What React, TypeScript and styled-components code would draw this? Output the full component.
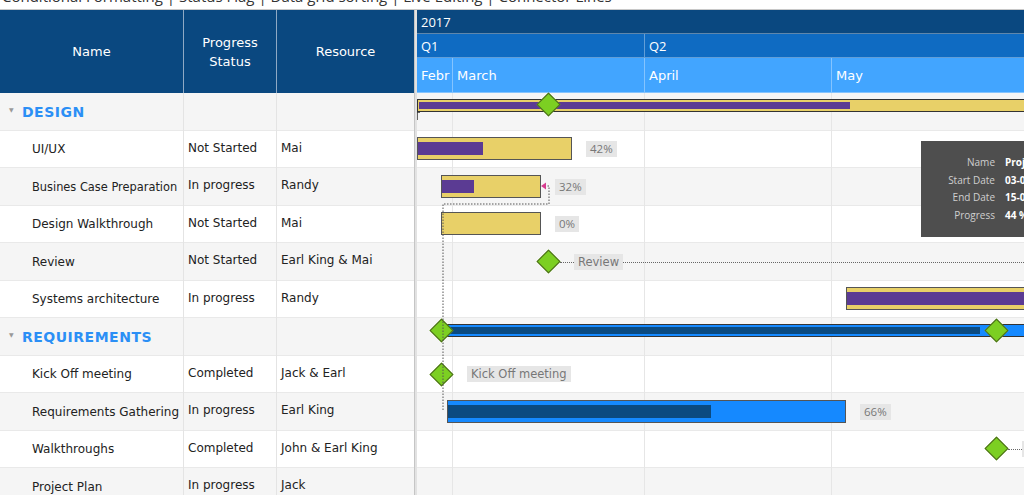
import React from 'react';
import styled, { createGlobalStyle } from 'styled-components';

const GlobalStyle = createGlobalStyle`
  html, body {
    margin: 0;
    padding: 0;
    background: #fff;
    overflow: hidden;
  }
`;

const comic = `"Comic Sans MS", "DejaVu Sans", sans-serif`;
const ui = `"Segoe UI", "Open Sans", "Noto Sans", sans-serif`;

const ROW_H = 37.5;

type Row = {
  name: string;
  group?: boolean;
  status?: string;
  resource?: string;
};

const rows: Row[] = [
  { name: 'DESIGN', group: true },
  { name: 'UI/UX', status: 'Not Started', resource: 'Mai' },
  { name: 'Busines Case Preparation', status: 'In progress', resource: 'Randy' },
  { name: 'Design Walkthrough', status: 'Not Started', resource: 'Mai' },
  { name: 'Review', status: 'Not Started', resource: 'Earl King & Mai' },
  { name: 'Systems architecture', status: 'In progress', resource: 'Randy' },
  { name: 'REQUIREMENTS', group: true },
  { name: 'Kick Off meeting', status: 'Completed', resource: 'Jack & Earl' },
  { name: 'Requirements Gathering', status: 'In progress', resource: 'Earl King' },
  { name: 'Walkthroughs', status: 'Completed', resource: 'John & Earl King' },
  { name: 'Project Plan', status: 'In progress', resource: 'Jack' },
];

type Item =
  | { kind: 'summary'; left: number; width: number; progress: number; tone: 'yellow' | 'blue' }
  | { kind: 'task'; left: number; width: number; progress: number; tone: 'yellow' | 'blue'; label?: string }
  | { kind: 'milestone'; left: number; top: number; label?: string; line?: boolean };

// chart items for each row, x is pixels from the chart's left edge
const items: Item[][] = [
  [
    { kind: 'summary', left: 0, width: 720, progress: 431, tone: 'yellow' },
    { kind: 'milestone', left: 131, top: 11 },
  ],
  [{ kind: 'task', left: 0, width: 155, progress: 65, tone: 'yellow', label: '42%' }],
  [{ kind: 'task', left: 24, width: 100, progress: 32, tone: 'yellow', label: '32%' }],
  [{ kind: 'task', left: 24, width: 100, progress: 0, tone: 'yellow', label: '0%' }],
  [{ kind: 'milestone', left: 131, top: 18, label: 'Review', line: true }],
  [{ kind: 'task', left: 429, width: 300, progress: 300, tone: 'yellow' }],
  [
    { kind: 'summary', left: 24, width: 700, progress: 537, tone: 'blue' },
    { kind: 'milestone', left: 24, top: 12 },
    { kind: 'milestone', left: 579, top: 12 },
  ],
  [{ kind: 'milestone', left: 24, top: 18.5, label: 'Kick Off meeting' }],
  [{ kind: 'task', left: 30, width: 399, progress: 263, tone: 'blue', label: '66%' }],
  [{ kind: 'milestone', left: 579, top: 18, line: true, label: 'Walkthroughs' }],
  [],
];

const TitleStrip = styled.div`
  height: 9px;
  overflow: hidden;
  position: relative;
  font-family: ${ui};
  font-size: 15px;
  color: #333;
  line-height: 18px;
`;

const TitleText = styled.div`
  margin-top: -13px;
  padding-left: 2px;
  white-space: nowrap;
`;

const Main = styled.div`
  display: flex;
  height: 486px;
  border-top: 1px solid #c8c8c8;
  box-sizing: border-box;
`;

const Grid = styled.div`
  width: 414px;
  flex: none;
  display: flex;
  flex-direction: column;
  font-family: ${comic};
`;

const GridHeader = styled.div`
  display: grid;
  grid-template-columns: 184px 93px 137px;
  height: 83px;
  background: #0a4880;
  color: #fff;
  font-size: 13px;
  flex: none;
`;

const HeadCell = styled.div`
  display: flex;
  align-items: center;
  justify-content: center;
  text-align: center;
  line-height: 19px;
  border-right: 1px solid #8fa9c4;
  &:last-child {
    border-right: none;
  }
`;

const GridRow = styled.div<{ $alt: boolean }>`
  display: grid;
  grid-template-columns: 184px 93px 137px;
  height: ${ROW_H}px;
  flex: none;
  background: ${(p) => (p.$alt ? '#f5f5f5' : '#fff')};
  box-shadow: inset 0 -1px 0 #e9e9e9;
  font-size: 12px;
  color: #222;
`;

const Cell = styled.div<{ $indent?: number; $lift?: number; $size?: number }>`
  display: flex;
  align-items: center;
  padding-left: ${(p) => p.$indent ?? 4}px;
  padding-bottom: ${(p) => p.$lift ?? 0}px;
  font-size: ${(p) => p.$size ?? 12}px;
  border-right: 1px solid #e4e4e4;
  white-space: nowrap;
  overflow: hidden;
  &:last-child {
    border-right: none;
  }
`;

const GroupName = styled.span`
  color: #2b8ff5;
  font-weight: bold;
  font-size: 14px;
  letter-spacing: 0.5px;
`;

const Caret = styled.span`
  color: #999;
  font-size: 6px;
  width: 13px;
  margin-top: -4px;
`;

const Splitter = styled.div`
  width: 3px;
  flex: none;
  background: #e2e2e2;
  border-left: 1px solid #c5c5c5;
  box-sizing: border-box;
`;

const Chart = styled.div`
  flex: 1;
  overflow: hidden;
  display: flex;
  flex-direction: column;
  min-width: 0;
`;

const ChartHeadRow = styled.div<{ $h: number; $bg: string; $comic?: boolean }>`
  display: flex;
  height: ${(p) => p.$h}px;
  flex: none;
  background: ${(p) => p.$bg};
  color: #fff;
  font-family: ${(p) => (p.$comic ? comic : ui)};
  font-size: 13px;
  border-bottom: 1px solid rgba(255, 255, 255, 0.35);
  box-sizing: border-box;
`;

const HeadSpan = styled.div<{ $w: number }>`
  width: ${(p) => p.$w}px;
  flex: none;
  display: flex;
  align-items: center;
  padding-left: 4px;
  box-sizing: border-box;
  border-right: 1px solid rgba(255, 255, 255, 0.35);
  white-space: nowrap;
  overflow: hidden;
  &:last-child {
    border-right: none;
    flex: 1;
  }
`;

const ChartBody = styled.div`
  position: relative;
  flex: 1;
  display: flex;
  flex-direction: column;
`;

const GridLines = styled.div`
  position: absolute;
  inset: 0;
  display: flex;
  pointer-events: none;
`;

const GridCol = styled.div<{ $w: number }>`
  width: ${(p) => p.$w}px;
  flex: none;
  border-right: 1px solid #e6e6e6;
  box-sizing: border-box;
`;

const ChartRow = styled.div<{ $alt: boolean }>`
  position: relative;
  height: ${ROW_H}px;
  flex: none;
  background: ${(p) => (p.$alt ? '#f5f5f5' : '#fff')};
  box-shadow: inset 0 -1px 0 #e9e9e9;
`;

const tones = {
  yellow: { fill: '#e8d068', prog: '#5b3b93' },
  blue: { fill: '#1589ff', prog: '#0b4a80' },
};

const SummaryBar = styled.div<{ $tone: 'yellow' | 'blue' }>`
  position: absolute;
  top: 6px;
  height: 13px;
  background: ${(p) => tones[p.$tone].fill};
  border: 1px solid #333;
  box-sizing: border-box;
  z-index: 1;
`;

const SummaryProgress = styled.div<{ $tone: 'yellow' | 'blue' }>`
  position: absolute;
  left: 1px;
  top: 2px;
  bottom: 2px;
  background: ${(p) => tones[p.$tone].prog};
`;

const TaskBar = styled.div<{ $tone: 'yellow' | 'blue' }>`
  position: absolute;
  top: 6.5px;
  height: 23px;
  background: ${(p) => tones[p.$tone].fill};
  border: 1px solid #555;
  box-sizing: border-box;
  z-index: 1;
`;

const TaskProgress = styled.div<{ $tone: 'yellow' | 'blue' }>`
  position: absolute;
  left: 0;
  top: 4px;
  bottom: 4px;
  background: ${(p) => tones[p.$tone].prog};
`;

const Label = styled.div<{ $comic?: boolean }>`
  position: absolute;
  top: 50%;
  transform: translateY(-50%);
  height: 16px;
  line-height: 16px;
  padding: 0 4px;
  background: #e6e6e6;
  color: #777;
  font-family: ${(p) => (p.$comic ? comic : ui)};
  font-size: 11.5px;
  white-space: nowrap;
  z-index: 2;
`;

const Diamond = styled.div`
  position: absolute;
  width: 15px;
  height: 15px;
  margin: -8.5px 0 0 -8.5px;
  background: #7ccf22;
  border: 1px solid #4b6a1c;
  transform: rotate(45deg);
  z-index: 3;
`;

const DotLine = styled.div`
  position: absolute;
  right: 0;
  top: 50%;
  border-top: 1px dotted #666;
  z-index: 1;
`;

const Tooltip = styled.div`
  position: absolute;
  left: 504px;
  top: 48px;
  width: 200px;
  height: 96px;
  background: #4e4e4e;
  z-index: 5;
  display: grid;
  grid-template-columns: 74px 1fr;
  align-content: center;
  column-gap: 10px;
  row-gap: 2px;
  font-family: ${ui};
  font-size: 10px;
  line-height: 15.5px;
`;

const TipKey = styled.div`
  color: #cfcfcf;
  text-align: right;
`;

const TipVal = styled.div`
  color: #fff;
  font-weight: bold;
`;

const Connectors = styled.svg`
  position: absolute;
  left: 0;
  top: 0;
  z-index: 4;
  overflow: visible;
  pointer-events: none;
`;

const renderItem = (it: Item, i: number) => {
  if (it.kind === 'summary') {
    return (
      <SummaryBar key={i} $tone={it.tone} style={{ left: it.left, width: it.width }}>
        <SummaryProgress $tone={it.tone} style={{ width: it.progress }} />
      </SummaryBar>
    );
  }
  if (it.kind === 'task') {
    return (
      <React.Fragment key={i}>
        <TaskBar $tone={it.tone} style={{ left: it.left, width: it.width }}>
          {it.progress > 0 && <TaskProgress $tone={it.tone} style={{ width: it.progress }} />}
        </TaskBar>
        {it.label && <Label style={{ left: it.left + it.width + 14 }}>{it.label}</Label>}
      </React.Fragment>
    );
  }
  return (
    <React.Fragment key={i}>
      <Diamond style={{ left: it.left, top: it.top }} />
      {it.line && <DotLine style={{ left: it.left + 12 }} />}
      {it.label && (
        <Label $comic style={{ left: it.left + 26 }}>
          {it.label}
        </Label>
      )}
    </React.Fragment>
  );
};

const App = () => {
  return (
    <>
      <GlobalStyle />
      <TitleStrip>
        <TitleText>
          Conditional Formatting | Status Flag | Data grid sorting | Live Editing | Connector Lines
        </TitleText>
      </TitleStrip>
      <Main>
        <Grid>
          <GridHeader>
            <HeadCell>Name</HeadCell>
            <HeadCell>
              Progress
              <br />
              Status
            </HeadCell>
            <HeadCell>Resource</HeadCell>
          </GridHeader>
          {rows.map((r, i) => (
            <GridRow key={r.name} $alt={i % 2 === 0}>
              {r.group ? (
                <Cell $indent={9}>
                  <Caret>▼</Caret>
                  <GroupName>{r.name}</GroupName>
                </Cell>
              ) : (
                <Cell $indent={32} $size={r.name.length > 22 ? 11.4 : 12}>
                  {r.name}
                </Cell>
              )}
              <Cell $lift={3}>{r.status}</Cell>
              <Cell $lift={3}>{r.resource}</Cell>
            </GridRow>
          ))}
        </Grid>
        <Splitter />
        <Chart>
          <ChartHeadRow $h={24} $bg="#0a4880">
            <HeadSpan $w={700}>2017</HeadSpan>
          </ChartHeadRow>
          <ChartHeadRow $h={24} $bg="#0f6bc2">
            <HeadSpan $w={228}>Q1</HeadSpan>
            <HeadSpan $w={400}>Q2</HeadSpan>
          </ChartHeadRow>
          <ChartHeadRow $h={35} $bg="#42a5ff" $comic>
            <HeadSpan $w={36}>Febr</HeadSpan>
            <HeadSpan $w={192}>March</HeadSpan>
            <HeadSpan $w={187}>April</HeadSpan>
            <HeadSpan $w={200}>May</HeadSpan>
          </ChartHeadRow>
          <ChartBody>
            {rows.map((r, i) => (
              <ChartRow key={r.name} $alt={i % 2 === 0}>
                {items[i].map(renderItem)}
              </ChartRow>
            ))}
            <GridLines>
              <GridCol $w={36} />
              <GridCol $w={192} />
              <GridCol $w={187} />
            </GridLines>
            <Connectors width="607" height="400">
              <path
                d="M26 317 V111 H132 V93 H128"
                fill="none"
                stroke="#555"
                strokeWidth="1"
                strokeDasharray="1.5 1.5"
              />
              <path d="M124 93 L129 89.5 L129 96.5 Z" fill="#d63c8f" />
              <path d="M0 19 V27 M0 19 H3" stroke="#333" strokeWidth="1.5" fill="none" />
            </Connectors>
            <Tooltip>
              <TipKey>Name</TipKey>
              <TipVal>Project Plan</TipVal>
              <TipKey>Start Date</TipKey>
              <TipVal>03-04-2017</TipVal>
              <TipKey>End Date</TipKey>
              <TipVal>15-05-2017</TipVal>
              <TipKey>Progress</TipKey>
              <TipVal>44 %</TipVal>
            </Tooltip>
          </ChartBody>
        </Chart>
      </Main>
    </>
  );
};

export default App;
